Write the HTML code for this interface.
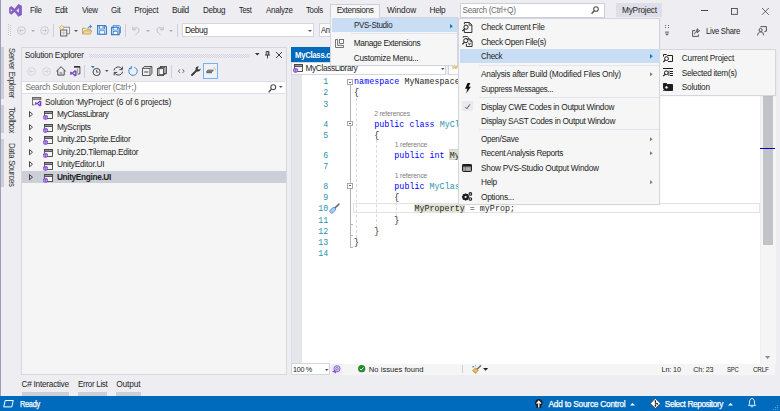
<!DOCTYPE html>
<html><head><meta charset="utf-8"><title>MyProject - Microsoft Visual Studio</title>
<style>
*{box-sizing:border-box;margin:0;padding:0}
html,body{width:780px;height:411px;overflow:hidden;background:#eeeef2;font-family:"Liberation Sans",sans-serif}
#w{position:absolute;left:0;top:0;width:780px;height:411px;overflow:hidden;background:#eeeef2}
.a{position:absolute}
.t{position:absolute;white-space:nowrap;line-height:1}
.cl,.ln{position:absolute;white-space:pre;font-family:"Liberation Mono",monospace;line-height:1;letter-spacing:0.050px;font-size:8.30px;}
.ln{color:#2b91af}
svg{position:absolute;overflow:visible}
.menu{background:#f6f6f6;border:1px solid #d4d6df;box-shadow:0.5px 0.5px 1.5px rgba(0,0,0,.07)}
.hl{background:#c9def5}
.sep{background:#e4e5ea;height:1px}
</style></head><body><div id="w">

<!-- window left border -->
<div class="a" style="left:0;top:0;width:1px;height:411px;background:#9b9fb9"></div>

<!-- ===== title / menu bar ===== -->
<svg style="left:8.85px;top:4.1px" width="13" height="12.8" viewBox="0 0 13 13"><path d="M0 3.8 L2.3 2.1 L5.6 4.9 L9.4 0 L13 1.8 V11.2 L9.4 13 L5.6 8.1 L2.3 10.9 L0 9.2 Z M1.7 5.2 V7.8 L3.3 6.5 Z M9.9 4.2 L7.4 6.5 L9.9 8.8 Z" fill="#8661c5" fill-rule="evenodd"/></svg>
<!-- extensions header (open) -->
<div class="a" style="left:330.4px;top:4.1px;width:50px;height:14.5px;background:#f6f6f6;border:1px solid #ccced8;border-bottom:none"></div>
<!-- search box -->
<div class="a" style="left:459.5px;top:3px;width:145px;height:14.6px;background:#fff;border:1px solid #ccced8"></div>
<svg style="left:591px;top:6px" width="8" height="9" viewBox="0 0 8 9"><circle cx="5" cy="3" r="2.3" fill="none" stroke="#555" stroke-width="1.1"/><path d="M3.3 4.8 L0.6 7.8" stroke="#555" stroke-width="1.4"/></svg>
<!-- solution name -->
<div class="a" style="left:616.4px;top:2.7px;width:45.4px;height:14.7px;background:#dddee8"></div>
<!-- window controls -->
<div class="a" style="left:700.7px;top:10.4px;width:7px;height:0.9px;background:#4a4a4a"></div>
<svg style="left:731.2px;top:8px" width="6.8" height="6.8" viewBox="0 0 6.8 6.8"><rect x="0.45" y="0.45" width="5.9" height="5.9" fill="none" stroke="#4a4a4a" stroke-width="0.9"/></svg>
<svg style="left:761.5px;top:8px" width="7" height="7" viewBox="0 0 7 7"><path d="M0 0 L6.8 6.8 M6.8 0 L0 6.8" stroke="#4a4a4a" stroke-width="0.85"/></svg>

<!-- ===== toolbar ===== -->
<div id="tb">
<!-- grip -->
<svg style="left:8px;top:24px" width="4" height="12" viewBox="0 0 4 12"><g fill="#c3c5d2"><rect x="0" y="0" width="1" height="1"/><rect x="2" y="1" width="1" height="1"/><rect x="0" y="2" width="1" height="1"/><rect x="2" y="3" width="1" height="1"/><rect x="0" y="4" width="1" height="1"/><rect x="2" y="5" width="1" height="1"/><rect x="0" y="6" width="1" height="1"/><rect x="2" y="7" width="1" height="1"/><rect x="0" y="8" width="1" height="1"/><rect x="2" y="9" width="1" height="1"/><rect x="0" y="10" width="1" height="1"/><rect x="2" y="11" width="1" height="1"/></g></svg>
<!-- back / fwd -->
<svg style="left:17px;top:26px" width="9" height="9" viewBox="0 0 9 9"><circle cx="4.5" cy="4.5" r="3.9" fill="none" stroke="#c2c3cb" stroke-width="0.9"/><path d="M6.6 4.5 H2.6 M4.3 2.8 L2.6 4.5 L4.3 6.2" fill="none" stroke="#c2c3cb" stroke-width="0.9"/></svg>
<svg style="left:31.2px;top:29.6px" width="4" height="2" viewBox="0 0 4 2"><path d="M0 0 H4 L2 2 Z" fill="#a9abb8"/></svg>
<svg style="left:39.5px;top:26px" width="9" height="9" viewBox="0 0 9 9"><circle cx="4.5" cy="4.5" r="3.9" fill="none" stroke="#c2c3cb" stroke-width="0.9"/><path d="M2.4 4.5 H6.4 M4.7 2.8 L6.4 4.5 L4.7 6.2" fill="none" stroke="#c2c3cb" stroke-width="0.9"/></svg>
<div class="a" style="left:53.3px;top:24px;width:1px;height:12.5px;background:#ccced8"></div>
<!-- new project -->
<svg style="left:59px;top:24.6px" width="11.2" height="11.6" viewBox="0 0 11.2 11.6"><rect x="3.8" y="2.2" width="6.6" height="6.6" fill="#f4f4f6" stroke="#777" stroke-width="0.8"/><rect x="1.6" y="5" width="6.2" height="6" fill="#f0f0f2" stroke="#555" stroke-width="0.9"/><path d="M4.7 5.2 V10.8 M1.8 8 H7.6" stroke="#aaa" stroke-width="0.6"/><path d="M2.7 0.4 L5 2.7 L2.7 5 L0.4 2.7 Z" fill="#f8edd2" stroke="#c99b3c" stroke-width="0.8"/></svg>
<svg style="left:74.2px;top:29.6px" width="4" height="2" viewBox="0 0 4 2"><path d="M0 0 H4 L2 2 Z" fill="#555"/></svg>
<!-- open folder -->
<svg style="left:82px;top:25px" width="11" height="10" viewBox="0 0 11 10"><path d="M0.5 9 V3.2 H3.4 L4.4 4.2 H8.4 V5.8" fill="#f8eed3" stroke="#c39c4c" stroke-width="0.9"/><path d="M0.6 9 L2.2 5.8 H9.8 L8.3 9 Z" fill="#efd9a0" stroke="#c39c4c" stroke-width="0.8"/><path d="M6 3.4 C6.3 2 7.4 1.4 8.8 1.5 M7.8 0.2 L9.6 1.5 L8.2 3" fill="none" stroke="#2a72c9" stroke-width="1"/></svg>
<!-- save -->
<svg style="left:97px;top:25.4px" width="10" height="9.8" viewBox="0 0 10 9.8"><path d="M0.6 0.6 H8.2 L9.4 1.8 V9.2 H0.6 Z" fill="#dfeaf8" stroke="#2f78ce" stroke-width="1.1"/><rect x="2.4" y="0.8" width="5" height="3.2" fill="#fff" stroke="#2f78ce" stroke-width="0.8"/><rect x="5.4" y="1.4" width="1.2" height="1.8" fill="#2f78ce"/><rect x="2.6" y="5.8" width="4.8" height="3.2" fill="#fff" stroke="#2f78ce" stroke-width="0.7"/></svg>
<!-- save all -->
<svg style="left:111px;top:25.4px" width="10" height="10.2" viewBox="0 0 10 10.2"><path d="M2 2 V0.6 H8.4 L9.5 1.7 V8 H8.2" fill="#cfe0f5" stroke="#4a8bd6" stroke-width="0.9"/><path d="M0.6 2.4 H7.2 L8.2 3.4 V9.6 H0.6 Z" fill="#dfeaf8" stroke="#2f78ce" stroke-width="1.1"/><rect x="2.2" y="2.6" width="4.2" height="2.4" fill="#fff" stroke="#2f78ce" stroke-width="0.7"/><rect x="2.3" y="6.6" width="4.2" height="2.8" fill="#fff" stroke="#2f78ce" stroke-width="0.7"/></svg>
<div class="a" style="left:125px;top:24px;width:1px;height:12.5px;background:#ccced8"></div>
<!-- undo / redo -->
<svg style="left:132px;top:25.6px" width="9" height="9" viewBox="0 0 9 9"><path d="M0.8 0.6 V3.8 H4 M0.9 3.7 C2.2 1.6 5.2 0.8 6.6 2.6 C7.8 4.2 6.4 6.6 3.6 8.6" fill="none" stroke="#b9bbc6" stroke-width="1"/></svg>
<svg style="left:146px;top:29.6px" width="4" height="2" viewBox="0 0 4 2"><path d="M0 0 H4 L2 2 Z" fill="#a9abb8"/></svg>
<svg style="left:155px;top:25.6px" width="9" height="9" viewBox="0 0 9 9"><path d="M8.2 0.6 V3.8 H5 M8.1 3.7 C6.8 1.6 3.8 0.8 2.4 2.6 C1.2 4.2 2.6 6.6 5.4 8.6" fill="none" stroke="#b9bbc6" stroke-width="1"/></svg>
<svg style="left:169.2px;top:29.6px" width="4" height="2" viewBox="0 0 4 2"><path d="M0 0 H4 L2 2 Z" fill="#a9abb8"/></svg>
<div class="a" style="left:177.3px;top:24px;width:1px;height:12.5px;background:#ccced8"></div>
<!-- combos -->
<div class="a" style="left:182.4px;top:23.3px;width:131.4px;height:14.2px;background:#fff;border:1px solid #d4d6e0"></div>
<svg style="left:307.8px;top:29.6px" width="4" height="2" viewBox="0 0 4 2"><path d="M0 0 H4 L2 2 Z" fill="#555"/></svg>
<div class="a" style="left:318.6px;top:23.3px;width:60px;height:14.2px;background:#fff;border:1px solid #d4d6e0"></div>
<!-- overflow -->
<svg style="left:664.5px;top:25px" width="4" height="11" viewBox="0 0 4 11"><g fill="#666"><rect x="0" y="0" width="1" height="1"/><rect x="3" y="0" width="1" height="1"/><rect x="0" y="2" width="1" height="1"/><rect x="3" y="2" width="1" height="1"/><rect x="0" y="6.6" width="4" height="1"/><path d="M0 8.6 H4 L2 10.8 Z"/></g></svg>
<!-- live share -->
<svg style="left:692px;top:27.6px" width="9" height="9" viewBox="0 0 9 9"><path d="M3.2 2.6 H0.6 V8.4 H6.4 V6.4" fill="none" stroke="#444" stroke-width="0.9"/><path d="M2.6 6.2 C3 4 4.4 2.8 6 2.8 M5 0.8 L7.6 2.8 L5 4.8 Z" fill="none" stroke="#444" stroke-width="0.9"/></svg>
<!-- feedback -->
<svg style="left:757px;top:25.6px" width="10" height="10" viewBox="0 0 10 10"><path d="M3.4 0.6 H9.4 V5.2 H8 L7 6.4" fill="none" stroke="#444" stroke-width="0.9"/><circle cx="3.6" cy="4" r="1.6" fill="#eeeef2" stroke="#444" stroke-width="0.9"/><path d="M0.6 9.4 C0.8 7 2 6 3.6 6 C5.2 6 6.4 7 6.6 9.4" fill="none" stroke="#444" stroke-width="0.9"/></svg>
</div>

<!-- ===== left sidebar ===== -->
<div class="a" style="left:1px;top:47.3px;width:3px;height:52px;background:#ccced8"></div>
<div class="a" style="left:1px;top:104.9px;width:3px;height:28px;background:#ccced8"></div>
<div class="a" style="left:1px;top:138.5px;width:3px;height:48.3px;background:#ccced8"></div>

<!-- ===== solution explorer ===== -->
<div class="a" style="left:21.3px;top:47.2px;width:265.4px;height:327.8px;background:#f5f5f5;border:1px solid #d6d8e1"></div>
<div class="a" style="left:22.3px;top:48.2px;width:263.4px;height:32.6px;background:#eeeef2"></div>
<svg style="left:88.9px;top:53.6px" width="161" height="4" viewBox="0 0 161 4"><defs><pattern id="dp" width="2" height="2" patternUnits="userSpaceOnUse"><rect x="0" y="0" width="1" height="1" fill="#b4b6c6"/><rect x="1" y="1" width="1" height="1" fill="#b4b6c6"/></pattern></defs><rect width="161" height="4" fill="url(#dp)" opacity="0.45"/></svg>
<svg style="left:254.7px;top:53.4px" width="4.6" height="2.4" viewBox="0 0 4.6 2.4"><path d="M0 0 H4.6 L2.3 2.4 Z" fill="#333"/></svg>
<svg style="left:265px;top:51.3px" width="5" height="7.4" viewBox="0 0 5 7.4"><path d="M1.2 0.4 V4 M3.8 0.4 V4 M1.2 0.5 H3.8 M0 4.1 H5 M2.5 4.1 V7.4 M3.2 0.4 V4" stroke="#333" stroke-width="0.9" fill="none"/></svg>
<svg style="left:275.8px;top:52px" width="6" height="6" viewBox="0 0 6 6"><path d="M0 0 L6 6 M6 0 L0 6" stroke="#333" stroke-width="0.95"/></svg>
<!-- SE toolbar -->
<svg style="left:27.2px;top:67px" width="9" height="9" viewBox="0 0 9 9"><circle cx="4.5" cy="4.5" r="3.9" fill="none" stroke="#d0d1d8" stroke-width="0.9"/><path d="M6.6 4.5 H2.6 M4.3 2.8 L2.6 4.5 L4.3 6.2" fill="none" stroke="#d0d1d8" stroke-width="0.9"/></svg>
<svg style="left:41.6px;top:67px" width="9" height="9" viewBox="0 0 9 9"><circle cx="4.5" cy="4.5" r="3.9" fill="none" stroke="#d0d1d8" stroke-width="0.9"/><path d="M2.4 4.5 H6.4 M4.7 2.8 L6.4 4.5 L4.7 6.2" fill="none" stroke="#d0d1d8" stroke-width="0.9"/></svg>
<svg style="left:55.8px;top:66.2px" width="10" height="9.6" viewBox="0 0 10 9.6"><path d="M0.4 5.2 L5 0.7 L9.6 5.2" fill="none" stroke="#444" stroke-width="1"/><path d="M1.8 4.2 V9.1 H8.2 V4.2" fill="none" stroke="#444" stroke-width="0.95"/><path d="M4.2 9 V6.4 H5.8 V9" fill="none" stroke="#777" stroke-width="0.7"/></svg>
<svg style="left:70px;top:65.8px" width="10.4" height="10.6" viewBox="0 0 10.4 10.6"><path d="M4 0.5 H9.9 V8 H7.4" fill="none" stroke="#444" stroke-width="0.9"/><path d="M4 0.9 H9.9" stroke="#333" stroke-width="1.6"/><path d="M7.6 2.4 V7" stroke="#777" stroke-width="0.7"/><path d="M4.9 4 L6.6 4.7 V9.7 L4.9 10.4 L2.2 7.9 L0.9 8.9 L0.1 8.5 V5.9 L0.9 5.5 L2.2 6.5 Z M5 5.9 L3.3 7.2 L5 8.5 Z" fill="#7b4fc0" fill-rule="evenodd"/></svg>
<div class="a" style="left:84.2px;top:65px;width:1px;height:12.5px;background:#ccced8"></div>
<svg style="left:90.6px;top:66px" width="10" height="10.4" viewBox="0 0 10 10.4"><path d="M0 0 H3.6 L1.8 2.2 Z" fill="#2a72c9"/><circle cx="5.6" cy="6" r="3.6" fill="none" stroke="#444" stroke-width="1"/><path d="M5.6 3.8 V6.2 H7.4" fill="none" stroke="#444" stroke-width="0.9"/></svg>
<svg style="left:105.4px;top:70.4px" width="3.6" height="2" viewBox="0 0 4 2"><path d="M0 0 H4 L2 2 Z" fill="#555"/></svg>
<svg style="left:113px;top:66.4px" width="10.6" height="10" viewBox="0 0 10.6 10"><path d="M1 4.4 C1.4 2 3.4 0.9 5.6 1 C7.2 1.1 8.4 2 9 3.2 M9.4 0.6 V3.6 H6.4" fill="none" stroke="#444" stroke-width="1"/><path d="M9.6 5.6 C9.2 8 7.2 9.1 5 9 C3.4 8.9 2.2 8 1.6 6.8 M1.2 9.4 V6.4 H4.2" fill="none" stroke="#444" stroke-width="1"/></svg>
<svg style="left:127.6px;top:66.4px" width="10" height="10" viewBox="0 0 10 10"><path d="M6.2 1.2 C8.2 1.8 9.4 3.6 9.2 5.6 C9 7.8 7.2 9.4 5 9.4 C2.6 9.4 0.8 7.6 0.8 5.2 C0.8 3.4 1.8 2 3.4 1.3" fill="none" stroke="#2b80d8" stroke-width="0.9"/><path d="M3.3 0 V2.6 H0.9" fill="none" stroke="#2b80d8" stroke-width="0.9"/></svg>
<svg style="left:142px;top:66px" width="10.4" height="10" viewBox="0 0 10.4 10"><path d="M0.5 2.4 H8 V9.5 H0.5 Z M0.5 2.4 L2.2 0.5 H9.9 L8 2.4 M9.9 0.5 V7.6 L8 9.5" fill="none" stroke="#444" stroke-width="0.9"/><path d="M2.2 6 H6.3" stroke="#444" stroke-width="1"/></svg>
<svg style="left:156.6px;top:66px" width="10.4" height="10" viewBox="0 0 10.4 10"><rect x="3.4" y="0.5" width="6" height="7" fill="none" stroke="#444" stroke-width="0.9"/><rect x="0.5" y="2.6" width="6" height="7" fill="#f5f5f5" stroke="#444" stroke-width="0.9"/><rect x="2" y="1.6" width="6" height="7" fill="none" stroke="#444" stroke-width="0.8"/></svg>
<div class="a" style="left:171.4px;top:65px;width:1px;height:12.5px;background:#ccced8"></div>
<svg style="left:178.2px;top:69.2px" width="6.6" height="4.2" viewBox="0 0 6.6 4.2"><path d="M2 0.3 L0.4 2.1 L2 3.9 M4.6 0.3 L6.2 2.1 L4.6 3.9" fill="none" stroke="#444" stroke-width="0.8"/></svg>
<svg style="left:191px;top:66px" width="10" height="10" viewBox="0 0 10 10"><path d="M1 9 L5.4 4.6" stroke="#3a3a3a" stroke-width="2" stroke-linecap="round"/><path d="M9.5 2.4 L7.9 3.8 L6.5 2.4 L7.9 0.7 C6.5 0.2 5 0.9 4.6 2.3 C4.3 3.4 4.8 4.6 5.7 5.2 C6.8 5.8 8.2 5.6 9 4.6 C9.5 4 9.7 3.2 9.5 2.4 Z" fill="#3a3a3a"/></svg>
<div class="a" style="left:203.3px;top:62.9px;width:14.6px;height:16px;background:#eef1f7;border:1px solid #73b1f0"></div>
<svg style="left:205.6px;top:67.4px" width="10.4" height="7" viewBox="0 0 10.4 7"><path d="M0.4 5 L1.8 3 H7.4 L6 5 Z" fill="#8a8a8a" stroke="#555" stroke-width="0.6"/><path d="M0.4 5.2 H6 V6.2 H0.4 Z" fill="#555"/><path d="M8.4 0.3 V1.3 M9.9 2.6 H9 M7.3 1.1 L7.9 1.7 M9.6 0.9 L9 1.5 M9.4 3.8 L8.8 3.4" stroke="#e0a020" stroke-width="0.7"/></svg>
<!-- SE search -->
<div class="a" style="left:22.3px;top:80.6px;width:263.2px;height:13px;background:#fff;border:1px solid #dcdde6;border-left:none;border-right:none"></div>
<svg style="left:267.8px;top:83.6px" width="8.4" height="8.4" viewBox="0 0 8 8"><circle cx="5" cy="3" r="2.3" fill="none" stroke="#555" stroke-width="1.1"/><path d="M3.3 4.8 L0.6 7.8" stroke="#555" stroke-width="1.4"/></svg>
<svg style="left:279px;top:86.4px" width="3.6" height="2" viewBox="0 0 4 2"><path d="M0 0 H4 L2 2 Z" fill="#555"/></svg>
<!-- selected row -->
<div class="a" style="left:22.3px;top:171.2px;width:263.4px;height:11.8px;background:#ccced8"></div>
<svg style="left:31.6px;top:97.2px" width="9.4" height="9.6" viewBox="0 0 9.4 9.6"><rect x="0.5" y="0.5" width="8.2" height="7.4" fill="#f4f4f4" stroke="#666" stroke-width="0.9"/><rect x="0.5" y="0.5" width="8.2" height="1.8" fill="#aaa" stroke="#666" stroke-width="0.9"/><rect x="2.6" y="3" width="7" height="6.6" fill="#f5f5f5"/><path d="M7.6 3.6 L9.3 4.3 V8.8 L7.6 9.5 L5 7.1 L3.8 8 L3.1 7.7 V5.4 L3.8 5.1 L5 6 Z M7.7 5.3 L6.1 6.55 L7.7 7.8 Z" fill="#7a40cc" fill-rule="evenodd"/></svg>
<svg style="left:29.3px;top:110.80px" width="4" height="6.4" viewBox="0 0 4 6.4"><path d="M0.5 0.6 V5.8 L3.5 3.2 Z" fill="none" stroke="#1e1e1e" stroke-width="0.8"/></svg>
<svg style="left:43px;top:111.10px" width="10" height="9.2" viewBox="0 0 10 9.2"><rect x="1.6" y="0.5" width="7.9" height="7" fill="#f4f4f4" stroke="#444" stroke-width="0.9"/><rect x="1.6" y="0.5" width="7.9" height="1.9" fill="#9a9a9a" stroke="#444" stroke-width="0.9"/><circle cx="2.5" cy="6.6" r="2.5" fill="#7a40cc"/><path d="M0.2 6.6 H4.8" stroke="#dccbf5" stroke-width="0.45"/><ellipse cx="2.5" cy="6.6" rx="1" ry="2.3" fill="none" stroke="#dccbf5" stroke-width="0.45"/></svg>
<svg style="left:29.3px;top:123.50px" width="4" height="6.4" viewBox="0 0 4 6.4"><path d="M0.5 0.6 V5.8 L3.5 3.2 Z" fill="none" stroke="#1e1e1e" stroke-width="0.8"/></svg>
<svg style="left:43px;top:123.80px" width="10" height="9.2" viewBox="0 0 10 9.2"><rect x="1.6" y="0.5" width="7.9" height="7" fill="#f4f4f4" stroke="#444" stroke-width="0.9"/><rect x="1.6" y="0.5" width="7.9" height="1.9" fill="#9a9a9a" stroke="#444" stroke-width="0.9"/><circle cx="2.5" cy="6.6" r="2.5" fill="#7a40cc"/><path d="M0.2 6.6 H4.8" stroke="#dccbf5" stroke-width="0.45"/><ellipse cx="2.5" cy="6.6" rx="1" ry="2.3" fill="none" stroke="#dccbf5" stroke-width="0.45"/></svg>
<svg style="left:29.3px;top:136.00px" width="4" height="6.4" viewBox="0 0 4 6.4"><path d="M0.5 0.6 V5.8 L3.5 3.2 Z" fill="none" stroke="#1e1e1e" stroke-width="0.8"/></svg>
<svg style="left:43px;top:136.30px" width="10" height="9.2" viewBox="0 0 10 9.2"><rect x="1.6" y="0.5" width="7.9" height="7" fill="#f4f4f4" stroke="#444" stroke-width="0.9"/><rect x="1.6" y="0.5" width="7.9" height="1.9" fill="#9a9a9a" stroke="#444" stroke-width="0.9"/><circle cx="2.5" cy="6.6" r="2.5" fill="#7a40cc"/><path d="M0.2 6.6 H4.8" stroke="#dccbf5" stroke-width="0.45"/><ellipse cx="2.5" cy="6.6" rx="1" ry="2.3" fill="none" stroke="#dccbf5" stroke-width="0.45"/></svg>
<svg style="left:29.3px;top:148.70px" width="4" height="6.4" viewBox="0 0 4 6.4"><path d="M0.5 0.6 V5.8 L3.5 3.2 Z" fill="none" stroke="#1e1e1e" stroke-width="0.8"/></svg>
<svg style="left:43px;top:149.00px" width="10" height="9.2" viewBox="0 0 10 9.2"><rect x="1.6" y="0.5" width="7.9" height="7" fill="#f4f4f4" stroke="#444" stroke-width="0.9"/><rect x="1.6" y="0.5" width="7.9" height="1.9" fill="#9a9a9a" stroke="#444" stroke-width="0.9"/><circle cx="2.5" cy="6.6" r="2.5" fill="#7a40cc"/><path d="M0.2 6.6 H4.8" stroke="#dccbf5" stroke-width="0.45"/><ellipse cx="2.5" cy="6.6" rx="1" ry="2.3" fill="none" stroke="#dccbf5" stroke-width="0.45"/></svg>
<svg style="left:29.3px;top:161.30px" width="4" height="6.4" viewBox="0 0 4 6.4"><path d="M0.5 0.6 V5.8 L3.5 3.2 Z" fill="none" stroke="#1e1e1e" stroke-width="0.8"/></svg>
<svg style="left:43px;top:161.60px" width="10" height="9.2" viewBox="0 0 10 9.2"><rect x="1.6" y="0.5" width="7.9" height="7" fill="#f4f4f4" stroke="#444" stroke-width="0.9"/><rect x="1.6" y="0.5" width="7.9" height="1.9" fill="#9a9a9a" stroke="#444" stroke-width="0.9"/><circle cx="2.5" cy="6.6" r="2.5" fill="#7a40cc"/><path d="M0.2 6.6 H4.8" stroke="#dccbf5" stroke-width="0.45"/><ellipse cx="2.5" cy="6.6" rx="1" ry="2.3" fill="none" stroke="#dccbf5" stroke-width="0.45"/></svg>
<svg style="left:29.3px;top:173.90px" width="4" height="6.4" viewBox="0 0 4 6.4"><path d="M0.5 0.6 V5.8 L3.5 3.2 Z" fill="none" stroke="#1e1e1e" stroke-width="0.8"/></svg>
<svg style="left:43px;top:174.20px" width="10" height="9.2" viewBox="0 0 10 9.2"><rect x="1.6" y="0.5" width="7.9" height="7" fill="#f4f4f4" stroke="#444" stroke-width="0.9"/><rect x="1.6" y="0.5" width="7.9" height="1.9" fill="#9a9a9a" stroke="#444" stroke-width="0.9"/><circle cx="2.5" cy="6.6" r="2.5" fill="#7a40cc"/><path d="M0.2 6.6 H4.8" stroke="#dccbf5" stroke-width="0.45"/><ellipse cx="2.5" cy="6.6" rx="1" ry="2.3" fill="none" stroke="#dccbf5" stroke-width="0.45"/></svg>
<svg style="left:293px;top:64.0px;z-index:2" width="10" height="9.2" viewBox="0 0 10 9.2"><rect x="1.6" y="0.5" width="7.9" height="7" fill="#f4f4f4" stroke="#444" stroke-width="0.9"/><rect x="1.6" y="0.5" width="7.9" height="1.9" fill="#9a9a9a" stroke="#444" stroke-width="0.9"/><circle cx="2.5" cy="6.6" r="2.5" fill="#7a40cc"/><path d="M0.2 6.6 H4.8" stroke="#dccbf5" stroke-width="0.45"/><ellipse cx="2.5" cy="6.6" rx="1" ry="2.3" fill="none" stroke="#dccbf5" stroke-width="0.45"/></svg>

<!-- ===== editor ===== -->
<div class="a" style="left:291.3px;top:47.4px;width:60px;height:14px;background:#006abc"></div>
<div class="a" style="left:291.3px;top:60.4px;width:484px;height:1.2px;background:#006abc"></div>
<!-- nav combos row -->
<div class="a" style="left:291.3px;top:61.6px;width:484px;height:13.6px;background:#eeeef2"></div>
<div class="a" style="left:291.3px;top:62.2px;width:155px;height:12.8px;background:#fff;border:1px solid #d4d6e0"></div>
<div class="a" style="left:448.4px;top:62.2px;width:155px;height:12.8px;background:#fff;border:1px solid #d4d6e0"></div>
<svg style="left:441px;top:67.6px" width="3.6" height="2" viewBox="0 0 4 2"><path d="M0 0 H4 L2 2 Z" fill="#555"/></svg>
<svg style="left:451px;top:64.4px" width="7" height="8" viewBox="0 0 7 8"><path d="M0.4 1.4 L2 0.4 L3 1.6 L4.6 0.6 L6.4 2.6 L5.2 4.6 L3.2 3.6 L1.6 5" fill="#f1d796" stroke="#c8983a" stroke-width="0.8"/></svg>
<!-- editor body -->
<div class="a" style="left:291.3px;top:75.2px;width:469.2px;height:289px;background:#fff"></div>
<div class="a" style="left:291.3px;top:75.2px;width:10.7px;height:289px;background:#e5e6e9"></div><div class="a" style="left:291.1px;top:75.2px;width:1px;height:289px;background:#dddee5"></div>
<!-- scrollbar -->
<div class="a" style="left:760.5px;top:75.2px;width:15px;height:289px;background:#f5f5f5"></div>
<div class="a" style="left:763px;top:80px;width:9.8px;height:165px;background:#c2c3c9"></div>
<div class="a" style="left:760.3px;top:147.6px;width:15px;height:1.2px;background:#0000cd"></div>
<svg style="left:765px;top:356.2px" width="5.2" height="3" viewBox="0 0 5.2 3"><path d="M0 0 H5.2 L2.6 3 Z" fill="#868999"/></svg>
<!-- guides/outlining -->
<div class="a" style="left:349.9px;top:84px;width:1px;height:163.4px;background:#b4b4b4"></div>
<div class="a" style="left:347.3px;top:79.4px;width:5.4px;height:5.4px;background:#fff;border:1px solid #a8a8a8"></div><div class="a" style="left:348.6px;top:81.6px;width:2.8px;height:1px;background:#666"></div>
<div class="a" style="left:347.3px;top:121.0px;width:5.4px;height:5.4px;background:#fff;border:1px solid #a8a8a8"></div><div class="a" style="left:348.6px;top:123.2px;width:2.8px;height:1px;background:#666"></div>
<div class="a" style="left:347.3px;top:183.2px;width:5.4px;height:5.4px;background:#fff;border:1px solid #a8a8a8"></div><div class="a" style="left:348.6px;top:185.4px;width:2.8px;height:1px;background:#666"></div>
<div class="a" style="left:349.9px;top:224.0px;width:3px;height:1px;background:#b4b4b4"></div>
<div class="a" style="left:349.9px;top:235.2px;width:3px;height:1px;background:#b4b4b4"></div>
<div class="a" style="left:349.9px;top:246.6px;width:3px;height:1px;background:#b4b4b4"></div>
<div class="a" style="left:356.0px;top:98.0px;width:0;height:140.0px;border-left:1px dashed #dadada"></div>
<div class="a" style="left:376.0px;top:140.0px;width:0;height:87.0px;border-left:1px dashed #dadada"></div>
<div class="a" style="left:396.0px;top:202.0px;width:0;height:14.0px;border-left:1px dashed #dadada"></div>
<!-- current line -->
<div class="a" style="left:353.2px;top:202.9px;width:406.4px;height:10.4px;border:1px solid #e3e3ec"></div>
<!-- highlighted refs -->
<div class="a" style="left:449px;top:148.6px;width:50.6px;height:11.5px;background:#dfe2d2;border:1px solid #d3d6c4"></div>
<div class="a" style="left:414.2px;top:203.6px;width:50.4px;height:9px;background:#e2e5d6"></div>
<div class="cl" style="top:78.00px;left:354.10px"><span style="color:#0000ff">namespace</span><span style="color:#1e1e1e">&nbsp;MyNamespace</span></div>
<div class="ln" style="top:78.00px;left:323.17px">1</div>
<div class="cl" style="top:89.00px;left:354.10px"><span style="color:#1e1e1e">{</span></div>
<div class="ln" style="top:89.00px;left:323.17px">2</div>
<div class="cl" style="top:101.00px;left:354.10px"></div>
<div class="ln" style="top:101.00px;left:323.17px">3</div>
<div class="cl" style="top:121.00px;left:354.10px"><span style="color:#1e1e1e">&nbsp;&nbsp;&nbsp;&nbsp;</span><span style="color:#0000ff">public</span><span style="color:#1e1e1e">&nbsp;</span><span style="color:#0000ff">class</span><span style="color:#1e1e1e">&nbsp;</span><span style="color:#2b91af">MyClass</span></div>
<div class="ln" style="top:121.00px;left:323.17px">4</div>
<div class="cl" style="top:132.00px;left:354.10px"><span style="color:#1e1e1e">&nbsp;&nbsp;&nbsp;&nbsp;{</span></div>
<div class="ln" style="top:132.00px;left:323.17px">5</div>
<div class="cl" style="top:152.00px;left:354.10px"><span style="color:#1e1e1e">&nbsp;&nbsp;&nbsp;&nbsp;&nbsp;&nbsp;&nbsp;&nbsp;</span><span style="color:#0000ff">public</span><span style="color:#1e1e1e">&nbsp;</span><span style="color:#0000ff">int</span><span style="color:#1e1e1e">&nbsp;MyProperty&nbsp;{&nbsp;</span><span style="color:#0000ff">get</span><span style="color:#1e1e1e">;&nbsp;</span><span style="color:#0000ff">set</span><span style="color:#1e1e1e">;&nbsp;}</span></div>
<div class="ln" style="top:152.00px;left:323.17px">6</div>
<div class="cl" style="top:163.00px;left:354.10px"></div>
<div class="ln" style="top:163.00px;left:323.17px">7</div>
<div class="cl" style="top:183.00px;left:354.10px"><span style="color:#1e1e1e">&nbsp;&nbsp;&nbsp;&nbsp;&nbsp;&nbsp;&nbsp;&nbsp;</span><span style="color:#0000ff">public</span><span style="color:#1e1e1e">&nbsp;</span><span style="color:#2b91af">MyClass</span><span style="color:#1e1e1e">(</span><span style="color:#0000ff">int</span><span style="color:#1e1e1e">&nbsp;myProp)</span></div>
<div class="ln" style="top:183.00px;left:323.17px">8</div>
<div class="cl" style="top:194.00px;left:354.10px"><span style="color:#1e1e1e">&nbsp;&nbsp;&nbsp;&nbsp;&nbsp;&nbsp;&nbsp;&nbsp;{</span></div>
<div class="ln" style="top:194.00px;left:323.17px">9</div>
<div class="cl" style="top:205.00px;left:354.10px"><span style="color:#1e1e1e">&nbsp;&nbsp;&nbsp;&nbsp;&nbsp;&nbsp;&nbsp;&nbsp;&nbsp;&nbsp;&nbsp;&nbsp;MyProperty&nbsp;=&nbsp;myProp;</span></div>
<div class="ln" style="top:205.00px;left:318.14px">10</div>
<div class="cl" style="top:217.00px;left:354.10px"><span style="color:#1e1e1e">&nbsp;&nbsp;&nbsp;&nbsp;&nbsp;&nbsp;&nbsp;&nbsp;}</span></div>
<div class="ln" style="top:217.00px;left:318.14px">11</div>
<div class="cl" style="top:228.00px;left:354.10px"><span style="color:#1e1e1e">&nbsp;&nbsp;&nbsp;&nbsp;}</span></div>
<div class="ln" style="top:228.00px;left:318.14px">12</div>
<div class="cl" style="top:239.00px;left:354.10px"><span style="color:#1e1e1e">}</span></div>
<div class="ln" style="top:239.00px;left:318.14px">13</div>
<div class="cl" style="top:250.00px;left:354.10px"></div>
<div class="ln" style="top:250.00px;left:318.14px">14</div>
<!-- screwdriver -->
<svg style="left:329px;top:202.6px" width="11" height="11" viewBox="0 0 11 11"><path d="M6.2 4.8 L9.9 1.1" stroke="#666" stroke-width="1.5" stroke-linecap="round"/><path d="M5.9 5.1 L6.6 4.4" stroke="#666" stroke-width="0.9"/><g transform="rotate(-45 3.7 7.3)"><rect x="0.5" y="5.5" width="6.6" height="3.6" rx="1.6" fill="#a9cbf0" stroke="#3f86da" stroke-width="0.8"/></g></svg>
<!-- editor bottom bar -->
<div class="a" style="left:291.3px;top:364.2px;width:484.2px;height:10.8px;background:#f5f5f5"></div>
<div class="a" style="left:291.3px;top:363.2px;width:39.2px;height:11.6px;background:#fff;border:1px solid #d4d6e0"></div>
<svg style="left:325px;top:369.4px" width="3.6" height="2" viewBox="0 0 4 2"><path d="M0 0 H4 L2 2 Z" fill="#555"/></svg>
<div class="a" style="left:330.5px;top:364.2px;width:11.5px;height:10.8px;background:#eeeef2"></div>
<svg style="left:332px;top:365px" width="8.4" height="9" viewBox="0 0 8.4 9"><circle cx="5" cy="3.8" r="3.1" fill="#ddd0f3" stroke="#8a63cb" stroke-width="1"/><circle cx="5" cy="3.8" r="1.3" fill="none" stroke="#8a63cb" stroke-width="0.8"/><path d="M0 6.4 L3.2 5 L4.2 8.8 L2.4 7.4 Z" fill="#7b4fc0"/></svg>
<svg style="left:358px;top:365.4px" width="7.4" height="7.4" viewBox="0 0 7.4 7.4"><circle cx="3.7" cy="3.7" r="3.6" fill="#1f8a2a"/><path d="M1.9 3.8 L3.2 5.1 L5.5 2.5" fill="none" stroke="#fff" stroke-width="1"/></svg>
<div class="a" style="left:462.2px;top:365px;width:1px;height:8.4px;background:#ccced8"></div>
<svg style="left:472px;top:364.8px" width="9.4" height="8.6" viewBox="0 0 9.4 8.6"><path d="M8.6 0.8 L5.4 4" stroke="#707070" stroke-width="1.6" stroke-linecap="round"/><path d="M3.8 2.8 L6.2 5.2 L3.6 8.4 L0.6 5.6 Z" fill="#d9b65e" stroke="#b98c2c" stroke-width="0.8"/><path d="M3 5.4 L4 6.4" stroke="#fff" stroke-width="0.8"/><path d="M1.2 1 V2.4 M0.5 1.7 H1.9 M3.6 0.2 V1.2" stroke="#2a72c9" stroke-width="0.8"/></svg>
<svg style="left:483.2px;top:367.8px" width="5.2" height="2.8" viewBox="0 0 4 2"><path d="M0 0 H4 L2 2 Z" fill="#222"/></svg>

<!-- ===== bottom tabs ===== -->
<div class="a" style="left:21.5px;top:392.2px;width:47.6px;height:3.8px;background:#ccced8"></div>
<div class="a" style="left:77.6px;top:392.2px;width:29.8px;height:3.8px;background:#ccced8"></div>
<div class="a" style="left:116.2px;top:392.2px;width:24.5px;height:3.8px;background:#ccced8"></div>

<!-- ===== status bar ===== -->
<div class="a" style="left:0;top:395.8px;width:780px;height:15.2px;background:#006abc"></div>
<svg style="left:3.2px;top:400.4px" width="11" height="7.4" viewBox="0 0 11 7.4"><path d="M2.2 0.5 H10.3 L8.8 6.9 H0.7 Z" fill="none" stroke="#fff" stroke-width="1"/></svg>
<svg style="left:535px;top:399.4px" width="7.6" height="9" viewBox="0 0 7.6 9"><path d="M3.8 0 C6 0 7.6 1.8 7.6 3.9 C7.6 5 7 6 6.2 6.7 V9 H1.4 V6.7 C0.6 6 0 5 0 3.9 C0 1.8 1.6 0 3.8 0 Z" fill="#1e1e1e"/><path d="M3.8 8.4 V2.4 M1.6 4.6 L3.8 2.2 L6 4.6" fill="none" stroke="#fff" stroke-width="1.3"/></svg>
<svg style="left:630px;top:403.4px" width="5" height="2.6" viewBox="0 0 5 2.6"><path d="M0 2.6 H5 L2.5 0 Z" fill="#fff"/></svg>
<svg style="left:649.8px;top:398.4px" width="10.8" height="10.8" viewBox="0 0 10.2 10.2"><path d="M5.1 0.3 L9.9 5.1 L5.1 9.9 L0.3 5.1 Z" fill="#fff" stroke="#1e1e1e" stroke-width="0.6"/><path d="M5.1 2.6 V7.6 M5.1 4.2 L6.9 5.6" stroke="#1e1e1e" stroke-width="0.8" fill="none"/><circle cx="5.1" cy="2.9" r="0.8" fill="#1e1e1e"/><circle cx="5.1" cy="7.4" r="0.8" fill="#1e1e1e"/><circle cx="6.9" cy="5.5" r="0.8" fill="#1e1e1e"/></svg>
<svg style="left:728px;top:403.4px" width="5" height="2.6" viewBox="0 0 5 2.6"><path d="M0 2.6 H5 L2.5 0 Z" fill="#fff"/></svg>
<svg style="left:747.6px;top:398px" width="8" height="9.8" viewBox="0 0 8 9.8"><path d="M0.5 7.4 C1.4 6.6 1.5 5.4 1.5 4 C1.5 2 2.5 0.6 4 0.6 C5.5 0.6 6.5 2 6.5 4 C6.5 5.4 6.6 6.6 7.5 7.4 Z" fill="none" stroke="#fff" stroke-width="0.9"/><path d="M3 8.4 C3.2 9.2 4.8 9.2 5 8.4" fill="none" stroke="#fff" stroke-width="0.9"/></svg>
<svg style="left:772.6px;top:404.6px" width="5" height="5" viewBox="0 0 5 5"><g fill="#5aa9e0"><rect x="4" y="0" width="1" height="1"/><rect x="2" y="2" width="1" height="1"/><rect x="4" y="2" width="1" height="1"/><rect x="0" y="4" width="1" height="1"/><rect x="2" y="4" width="1" height="1"/><rect x="4" y="4" width="1" height="1"/></g></svg>

<span class="t" id="t0" style="left:29.70px;top:6.00px;font-size:8.30px;color:#1e1e1e;letter-spacing:-0.300px;transform-origin:0 0;transform:scaleX(0.9619);">File</span>
<span class="t" id="t1" style="left:54.90px;top:6.00px;font-size:8.30px;color:#1e1e1e;letter-spacing:-0.300px;transform-origin:0 0;transform:scaleX(0.9554);">Edit</span>
<span class="t" id="t2" style="left:81.70px;top:6.00px;font-size:8.30px;color:#1e1e1e;letter-spacing:-0.300px;transform-origin:0 0;transform:scaleX(0.9443);">View</span>
<span class="t" id="t3" style="left:111.20px;top:6.00px;font-size:8.30px;color:#1e1e1e;letter-spacing:-0.300px;transform-origin:0 0;transform:scaleX(0.9591);">Git</span>
<span class="t" id="t4" style="left:134.20px;top:6.00px;font-size:8.30px;color:#1e1e1e;letter-spacing:-0.238px;">Project</span>
<span class="t" id="t5" style="left:172.00px;top:6.00px;font-size:8.30px;color:#1e1e1e;letter-spacing:-0.363px;">Build</span>
<span class="t" id="t6" style="left:203.00px;top:6.00px;font-size:8.30px;color:#1e1e1e;letter-spacing:-0.300px;transform-origin:0 0;transform:scaleX(0.9676);">Debug</span>
<span class="t" id="t7" style="left:239.20px;top:6.00px;font-size:8.30px;color:#1e1e1e;letter-spacing:-0.300px;transform-origin:0 0;transform:scaleX(0.8939);">Test</span>
<span class="t" id="t8" style="left:265.80px;top:6.00px;font-size:8.30px;color:#1e1e1e;letter-spacing:-0.300px;transform-origin:0 0;transform:scaleX(0.9700);">Analyze</span>
<span class="t" id="t9" style="left:306.40px;top:6.00px;font-size:8.30px;color:#1e1e1e;letter-spacing:-0.300px;transform-origin:0 0;transform:scaleX(0.9409);">Tools</span>
<span class="t" id="t10" style="left:387.00px;top:6.00px;font-size:8.30px;color:#1e1e1e;letter-spacing:-0.063px;">Window</span>
<span class="t" id="t11" style="left:429.60px;top:6.00px;font-size:8.30px;color:#1e1e1e;letter-spacing:-0.359px;">Help</span>
<span class="t" id="t14" style="left:622.00px;top:6.00px;font-size:8.30px;color:#1e1e1e;letter-spacing:-0.236px;">MyProject</span>
<span class="t" id="t15" style="left:184.90px;top:26.00px;font-size:8.30px;color:#1e1e1e;letter-spacing:-0.338px;">Debug</span>
<span class="t" id="t16" style="left:321.30px;top:26.00px;font-size:8.30px;color:#1e1e1e;letter-spacing:-0.300px;transform-origin:0 0;transform:scaleX(0.9188);">Any CPU</span>
<span class="t" id="t17" style="left:705.90px;top:27.00px;font-size:8.30px;color:#1e1e1e;letter-spacing:-0.300px;transform-origin:0 0;transform:scaleX(0.9277);">Live Share</span>
<span class="t" id="t36" style="left:16.00px;top:48.00px;font-size:8.30px;color:#333;letter-spacing:-0.300px;transform-origin:0 0;transform:rotate(90deg) scaleX(0.9412);">Server Explorer</span>
<span class="t" id="t37" style="left:16.00px;top:107.20px;font-size:8.30px;color:#333;letter-spacing:-0.368px;transform-origin:0 0;transform:rotate(90deg) scaleX(1.0000);">Toolbox</span>
<span class="t" id="t38" style="left:16.00px;top:143.00px;font-size:8.30px;color:#333;letter-spacing:-0.300px;transform-origin:0 0;transform:rotate(90deg) scaleX(0.9344);">Data Sources</span>
<span class="t" id="t39" style="left:24.80px;top:51.00px;font-size:8.30px;color:#1e1e1e;letter-spacing:-0.249px;">Solution Explorer</span>
<span class="t" id="t40" style="left:25.50px;top:83.00px;font-size:8.30px;color:#6d6d6d;letter-spacing:-0.274px;">Search Solution Explorer (Ctrl+;)</span>
<span class="t" id="t41" style="left:44.90px;top:98.00px;font-size:8.30px;color:#1e1e1e;letter-spacing:-0.157px;">Solution &#x27;MyProject&#x27; (6 of 6 projects)</span>
<span class="t" id="t42" style="left:56.90px;top:110.00px;font-size:8.30px;color:#1e1e1e;letter-spacing:-0.390px;">MyClassLibrary</span>
<span class="t" id="t43" style="left:56.90px;top:123.00px;font-size:8.30px;color:#1e1e1e;letter-spacing:-0.290px;">MyScripts</span>
<span class="t" id="t44" style="left:56.90px;top:135.00px;font-size:8.30px;color:#1e1e1e;letter-spacing:-0.256px;">Unity.2D.Sprite.Editor</span>
<span class="t" id="t45" style="left:56.90px;top:148.00px;font-size:8.30px;color:#1e1e1e;letter-spacing:-0.227px;">Unity.2D.Tilemap.Editor</span>
<span class="t" id="t46" style="left:56.90px;top:160.00px;font-size:8.30px;color:#1e1e1e;letter-spacing:-0.226px;">UnityEditor.UI</span>
<span class="t" id="t47" style="left:56.90px;top:173.00px;font-size:8.30px;color:#1e1e1e;letter-spacing:-0.355px;font-weight:bold;">UnityEngine.UI</span>
<span class="t" id="t48" style="left:294.70px;top:51.00px;font-size:8.30px;color:#ffffff;letter-spacing:-0.300px;transform-origin:0 0;transform:scaleX(0.9317);font-weight:bold;">MyClass.cs</span>
<span class="t" id="t49" style="left:305.60px;top:64.00px;font-size:8.30px;color:#1e1e1e;letter-spacing:-0.390px;">MyClassLibrary</span>
<span class="t" id="t50" style="left:293.00px;top:366.00px;font-size:7.40px;color:#1e1e1e;letter-spacing:-0.300px;transform-origin:0 0;transform:scaleX(0.9763);">100 %</span>
<span class="t" id="t51" style="left:368.80px;top:366.00px;font-size:7.60px;color:#1e1e1e;letter-spacing:0.024px;">No issues found</span>
<span class="t" id="t52" style="left:661.50px;top:366.00px;font-size:7.20px;color:#1e1e1e;letter-spacing:-0.097px;">Ln: 10</span>
<span class="t" id="t53" style="left:693.30px;top:366.00px;font-size:7.20px;color:#1e1e1e;letter-spacing:-0.177px;">Ch: 23</span>
<span class="t" id="t54" style="left:727.00px;top:367.00px;font-size:6.80px;color:#1e1e1e;letter-spacing:-0.300px;transform-origin:0 0;transform:scaleX(0.8742);">SPC</span>
<span class="t" id="t55" style="left:752.70px;top:367.00px;font-size:6.80px;color:#1e1e1e;letter-spacing:-0.300px;transform-origin:0 0;transform:scaleX(0.9377);">CRLF</span>
<span class="t" id="t56" style="left:21.50px;top:380.00px;font-size:8.30px;color:#1e1e1e;letter-spacing:-0.276px;">C# Interactive</span>
<span class="t" id="t57" style="left:77.60px;top:380.00px;font-size:8.30px;color:#1e1e1e;letter-spacing:-0.300px;transform-origin:0 0;transform:scaleX(0.9626);">Error List</span>
<span class="t" id="t58" style="left:116.20px;top:380.00px;font-size:8.30px;color:#1e1e1e;letter-spacing:-0.084px;">Output</span>
<span class="t" id="t59" style="left:19.70px;top:400.00px;font-size:8.30px;color:#fff;letter-spacing:-0.300px;transform-origin:0 0;transform:scaleX(0.8866);-webkit-text-stroke:0.25px #fff;">Ready</span>
<span class="t" id="t60" style="left:548.50px;top:400.00px;font-size:8.30px;color:#fff;letter-spacing:-0.222px;-webkit-text-stroke:0.25px #fff;">Add to Source Control</span>
<span class="t" id="t61" style="left:664.80px;top:400.00px;font-size:8.30px;color:#fff;letter-spacing:-0.396px;-webkit-text-stroke:0.25px #fff;">Select Repository</span>
<span class="t" id="t62" style="left:374.20px;top:111.00px;font-size:6.80px;color:#808080;letter-spacing:-0.171px;">2 references</span>
<span class="t" id="t63" style="left:394.80px;top:142.00px;font-size:6.80px;color:#808080;letter-spacing:-0.179px;">1 reference</span>
<span class="t" id="t64" style="left:394.80px;top:173.00px;font-size:6.80px;color:#808080;letter-spacing:-0.179px;">1 reference</span>

<!-- ===== Extensions dropdown ===== -->
<div class="a menu" style="left:330.4px;top:17.4px;width:128px;height:48.8px"></div>
<div class="a" style="left:331.4px;top:17.2px;width:48px;height:1.4px;background:#f6f6f6"></div>
<div class="a hl" style="left:332.4px;top:18.2px;width:124.8px;height:13.9px"></div>
<svg style="left:449.8px;top:23.6px" width="2.8" height="4.4" viewBox="0 0 2.8 4.4"><path d="M0 0 V4.4 L2.8 2.2 Z" fill="#007acc"/></svg>
<div class="a sep" style="left:351px;top:32.8px;width:106px"></div>
<svg style="left:335.2px;top:39px" width="9" height="9" viewBox="0 0 9 9"><path d="M2.6 0.5 H0.5 V8.5 H8.5 V6.4" fill="none" stroke="#555" stroke-width="0.8"/><rect x="4.6" y="0.5" width="3.9" height="3.9" fill="none" stroke="#555" stroke-width="0.8"/><path d="M2.6 0.5 V6.4 H8.5" fill="none" stroke="#555" stroke-width="0.8"/></svg>
<span class="t" id="t18" style="left:353.70px;top:21.00px;font-size:8.30px;color:#1e1e1e;letter-spacing:-0.300px;transform-origin:0 0;transform:scaleX(0.9604);">PVS-Studio</span>
<span class="t" id="t19" style="left:353.70px;top:39.00px;font-size:8.30px;color:#1e1e1e;letter-spacing:-0.367px;">Manage Extensions</span>
<span class="t" id="t20" style="left:353.70px;top:54.00px;font-size:8.30px;color:#1e1e1e;letter-spacing:-0.261px;">Customize Menu...</span>

<!-- ===== PVS-Studio submenu ===== -->
<div class="a menu" style="left:458.4px;top:17.8px;width:201.8px;height:187.6px"></div>
<div class="a hl" style="left:460px;top:48.8px;width:198.8px;height:14px"></div>
<div class="a sep" style="left:478.6px;top:65px;width:180px"></div>
<div class="a sep" style="left:478.6px;top:96.8px;width:180px"></div>
<div class="a sep" style="left:478.6px;top:128.6px;width:180px"></div>
<svg style="left:650.4px;top:54.3px" width="2.8" height="4.4" viewBox="0 0 2.8 4.4"><path d="M0 0 V4.4 L2.8 2.2 Z" fill="#007acc"/></svg>
<svg style="left:650.4px;top:71.5px" width="2.6" height="4.4" viewBox="0 0 2.8 4.4"><path d="M0 0 V4.4 L2.8 2.2 Z" fill="#7a7a7a"/></svg>
<svg style="left:650.4px;top:136.5px" width="2.6" height="4.4" viewBox="0 0 2.8 4.4"><path d="M0 0 V4.4 L2.8 2.2 Z" fill="#7a7a7a"/></svg>
<svg style="left:650.4px;top:151.2px" width="2.6" height="4.4" viewBox="0 0 2.8 4.4"><path d="M0 0 V4.4 L2.8 2.2 Z" fill="#7a7a7a"/></svg>
<svg style="left:650.4px;top:180.3px" width="2.6" height="4.4" viewBox="0 0 2.8 4.4"><path d="M0 0 V4.4 L2.8 2.2 Z" fill="#7a7a7a"/></svg>
<!-- icons -->
<svg style="left:462px;top:21.5px" width="10.4" height="11" viewBox="0 0 10.4 11"><path d="M2.4 2.4 V0.5 H7.4 L9.9 3 V10.5 H2.4 V8.2" fill="none" stroke="#1e1e1e" stroke-width="0.9"/><path d="M7.2 0.6 V3.2 H9.8" fill="none" stroke="#1e1e1e" stroke-width="0.8"/><circle cx="4" cy="5.2" r="2.1" fill="none" stroke="#1e1e1e" stroke-width="1"/><path d="M2.6 6.8 L0.5 9" stroke="#1e1e1e" stroke-width="1.2"/></svg>
<svg style="left:462px;top:36px" width="10.6" height="11" viewBox="0 0 10.6 11"><path d="M1.2 1.8 V0.5 H5.2 L6.6 1.9 V3" fill="none" stroke="#1e1e1e" stroke-width="0.8"/><path d="M4.4 7.8 V10.5 H10.1 V5 L8.2 3.1 H4.6" fill="none" stroke="#1e1e1e" stroke-width="0.9"/><path d="M8 3.2 V5.2 H10" fill="none" stroke="#1e1e1e" stroke-width="0.8"/><circle cx="3.8" cy="4.6" r="2.1" fill="none" stroke="#1e1e1e" stroke-width="1"/><path d="M2.4 6.2 L0.4 8.4" stroke="#1e1e1e" stroke-width="1.2"/><path d="M6.4 6.8 L7.4 9 L8.4 6.8" fill="none" stroke="#1e1e1e" stroke-width="0.8"/></svg>
<svg style="left:464.6px;top:83.2px" width="6" height="10.4" viewBox="0 0 6.2 11"><path d="M2.6 0 H5.6 L3.8 4 H6.2 L1.2 11 L2.4 6 H0 Z" fill="#111"/></svg>
<div class="a" style="left:462px;top:100.8px;width:10.7px;height:10.6px;background:#e9e9ee"></div>
<svg style="left:464.9px;top:103.6px" width="5.2" height="5.2" viewBox="0 0 5.2 5.2"><path d="M0.3 3.1 L1.9 4.7 L4.9 0.4" fill="none" stroke="#505050" stroke-width="1"/></svg>
<svg style="left:462px;top:163.5px" width="10" height="8" viewBox="0 0 10 8"><rect x="0.5" y="0.5" width="9" height="7" rx="0.8" fill="#8e8e8e" stroke="#1e1e1e" stroke-width="1"/><rect x="0.5" y="0.5" width="9" height="2" fill="#1e1e1e"/><path d="M1.6 4.2 H8.4 M1.6 5.9 H8.4" stroke="#d8d8d8" stroke-width="0.7"/><path d="M3.4 3 V7" stroke="#555" stroke-width="0.6"/></svg>
<svg style="left:462.4px;top:191.8px" width="10.4" height="9" viewBox="0 0 10.4 9"><circle cx="3.6" cy="5" r="2.3" fill="none" stroke="#1e1e1e" stroke-width="1.9"/><g stroke="#1e1e1e" stroke-width="1.3"><path d="M3.6 1.4 V8.6 M0 5 H7.2 M1.1 2.5 L6.1 7.5 M6.1 2.5 L1.1 7.5"/></g><circle cx="3.6" cy="5" r="1.1" fill="#f6f6f6"/><circle cx="8.4" cy="1.9" r="1.3" fill="#f6f6f6" stroke="#1e1e1e" stroke-width="1.1"/><circle cx="8.4" cy="7" r="1.3" fill="#f6f6f6" stroke="#1e1e1e" stroke-width="1.1"/></svg>
<span class="t" id="t21" style="left:481.00px;top:23.00px;font-size:8.30px;color:#1e1e1e;letter-spacing:-0.316px;">Check Current File</span>
<span class="t" id="t22" style="left:481.00px;top:38.00px;font-size:8.30px;color:#1e1e1e;letter-spacing:-0.369px;">Check Open File(s)</span>
<span class="t" id="t23" style="left:481.00px;top:52.00px;font-size:8.30px;color:#1e1e1e;letter-spacing:-0.300px;transform-origin:0 0;transform:scaleX(0.9673);">Check</span>
<span class="t" id="t24" style="left:481.00px;top:70.00px;font-size:8.30px;color:#1e1e1e;letter-spacing:-0.216px;">Analysis after Build (Modified Files Only)</span>
<span class="t" id="t25" style="left:481.00px;top:85.00px;font-size:8.30px;color:#1e1e1e;letter-spacing:-0.300px;transform-origin:0 0;transform:scaleX(0.9477);">Suppress Messages...</span>
<span class="t" id="t26" style="left:481.00px;top:103.00px;font-size:8.30px;color:#1e1e1e;letter-spacing:-0.286px;">Display CWE Codes in Output Window</span>
<span class="t" id="t27" style="left:481.00px;top:117.00px;font-size:8.30px;color:#1e1e1e;letter-spacing:-0.315px;">Display SAST Codes in Output Window</span>
<span class="t" id="t28" style="left:481.00px;top:135.00px;font-size:8.30px;color:#1e1e1e;letter-spacing:-0.300px;transform-origin:0 0;transform:scaleX(0.9715);">Open/Save</span>
<span class="t" id="t29" style="left:481.00px;top:149.00px;font-size:8.30px;color:#1e1e1e;letter-spacing:-0.368px;">Recent Analysis Reports</span>
<span class="t" id="t30" style="left:481.00px;top:164.00px;font-size:8.30px;color:#1e1e1e;letter-spacing:-0.249px;">Show PVS-Studio Output Window</span>
<span class="t" id="t31" style="left:481.00px;top:178.00px;font-size:8.30px;color:#1e1e1e;letter-spacing:-0.293px;">Help</span>
<span class="t" id="t32" style="left:481.00px;top:193.00px;font-size:8.30px;color:#1e1e1e;letter-spacing:-0.257px;">Options...</span>

<!-- ===== Check submenu ===== -->
<div class="a menu" style="left:658.9px;top:49.2px;width:116.8px;height:46.6px"></div>
<svg style="left:663px;top:54px" width="10" height="9" viewBox="0 0 10 9"><path d="M0.5 2.6 V0.5 H3.4 L4.4 1.5 H9.5 V7.5 H5" fill="none" stroke="#1e1e1e" stroke-width="1"/><circle cx="3.5" cy="4.6" r="1.9" fill="#f6f6f6" stroke="#1e1e1e" stroke-width="1"/><path d="M2.1 6.1 L0.4 8" stroke="#1e1e1e" stroke-width="1.2"/></svg>
<svg style="left:663px;top:68px" width="10" height="9" viewBox="0 0 10 9"><path d="M0 0.5 H10" stroke="#1e1e1e" stroke-width="1"/><path d="M7 3.5 H10 M7 5.5 H10 M7 7.5 H10" stroke="#1e1e1e" stroke-width="1"/><path d="M5.9 2.6 V8" stroke="#1e1e1e" stroke-width="0.8"/><circle cx="3.3" cy="4.8" r="1.9" fill="none" stroke="#1e1e1e" stroke-width="1"/><path d="M1.9 6.3 L0.3 8.2" stroke="#1e1e1e" stroke-width="1.2"/></svg>
<svg style="left:663px;top:83px" width="10" height="9" viewBox="0 0 10 9"><path d="M0.5 0.5 H3.4 L4.4 1.5 H9.5 V7.5 H0.5 Z" fill="#1e1e1e" stroke="#1e1e1e" stroke-width="1"/><path d="M0 5.6 V8.4 H2.4" fill="#f6f6f6" stroke="#f6f6f6" stroke-width="0.6"/><circle cx="3.5" cy="4.4" r="1.7" fill="#f6f6f6" stroke="#1e1e1e" stroke-width="0.9"/><path d="M2.2 5.9 L0.5 7.8" stroke="#1e1e1e" stroke-width="1.2"/></svg>
<span class="t" id="t33" style="left:681.80px;top:54.00px;font-size:8.30px;color:#1e1e1e;letter-spacing:-0.243px;">Current Project</span>
<span class="t" id="t34" style="left:681.80px;top:69.00px;font-size:8.30px;color:#1e1e1e;letter-spacing:-0.317px;">Selected item(s)</span>
<span class="t" id="t35" style="left:681.80px;top:83.00px;font-size:8.30px;color:#1e1e1e;letter-spacing:-0.255px;">Solution</span>
<span class="t" id="t12" style="left:336.70px;top:6.00px;font-size:8.30px;color:#1e1e1e;letter-spacing:-0.388px;">Extensions</span>
<span class="t" id="t13" style="left:462.50px;top:6.00px;font-size:8.30px;color:#6d6d6d;letter-spacing:-0.345px;">Search (Ctrl+Q)</span>
</div></body></html>
